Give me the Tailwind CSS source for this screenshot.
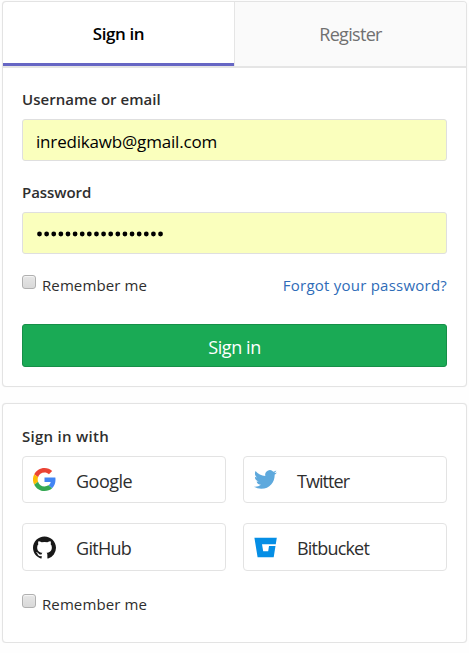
<!DOCTYPE html>
<html lang="en">
<head>
<meta charset="utf-8">
<title>Sign in</title>
<script src="https://cdn.jsdelivr.net/npm/@tailwindcss/browser@4"></script>
</head>
<body class="bg-[#fefefe] pt-px pl-0.5 font-['Open_Sans',sans-serif] text-[#2e2e2e] overflow-hidden">
<main class="flex w-[465px] flex-col gap-4">
  <section class="h-[386px] rounded border border-[#e3e3e3] bg-white shadow-[0_0_1px_#e5e5e5]">
    <nav class="flex h-[66px] overflow-hidden rounded-t-[3px] border-b-2 border-[#e5e5e5] text-[18px] leading-6">
      <a class="flex w-[231px] items-center justify-center border-b-[3px] border-[#6666c4] pt-0.5 text-[17px] font-semibold text-black"><span class="tracking-[-0.4px]">Sign in</span></a>
      <a class="flex flex-1 items-center justify-center border-l border-[#e5e5e5] bg-[#fafafa] text-[#707070]"><span class="tracking-[-0.7px]">Register</span></a>
    </nav>
    <form class="px-[19px] pt-5">
      <label class="block h-[31px] text-[15px] leading-[22px] font-semibold"><span class="tracking-[0.03px]">Username or email</span></label>
      <div class="flex h-[42px] items-center rounded-[3px] border border-[#dfdfdf] bg-[#faffbd] pt-1 pl-[13px] text-[17px] text-black"><span class="tracking-[-0.18px]">inredikawb@gmail.com</span></div>
      <label class="mt-5 block h-[31px] text-[15px] leading-[23px] font-semibold"><span class="tracking-[-0.05px]">Password</span></label>
      <div class="flex h-[42px] items-center rounded-[3px] border border-[#dfdfdf] bg-[#faffbd] pt-0.5 pl-[13px]">
        <svg width="130" height="8" viewBox="0 0 130 8"><path d="M3.5 4H127" fill="none" stroke="#000" stroke-width="4.8" stroke-linecap="round" stroke-dasharray="0 7.12"/></svg>
      </div>
      <div class="mt-5 flex h-[50px] items-start justify-between text-[15px] leading-[22px]">
        <label class="flex gap-1.5"><i class="mt-px h-3.5 w-3.5 rounded-[3px] border border-[#b0b0b0] bg-linear-to-b from-[#e6e6e6] to-[#d9d9d9] shadow-[inset_0_1px_1px_#f5f5f5]"></i><span class="tracking-[0.1px]">Remember me</span></label>
        <a class="text-[#2f6cb8]"><span class="tracking-[0.23px]">Forgot your password?</span></a>
      </div>
      <button type="button" class="flex h-[43px] w-full items-center justify-center rounded-[3px] border border-[#168f48] bg-[#1aaa55] pt-1 text-[18px] text-white"><span class="tracking-[-0.4px]">Sign in</span></button>
    </form>
  </section>

  <section class="h-60 rounded border border-[#e3e3e3] bg-white px-[19px] pt-[21px] shadow-[0_0_1px_#e5e5e5]">
    <h2 class="h-[31px] text-[15px] leading-[22px] font-semibold"><span class="tracking-[0.28px]">Sign in with</span></h2>
    <div class="grid grid-cols-2 gap-x-[17px] gap-y-5 text-[18px]">
      <a class="flex h-[47px] items-center gap-5 rounded border border-[#e3e3e3] pl-2.5">
        <svg class="h-[23px] w-[23px]" viewBox="0 0 48 48"><path fill="#EA4335" d="M24 9.5c3.54 0 6.71 1.22 9.21 3.6l6.85-6.85C35.9 2.38 30.47 0 24 0 14.62 0 6.51 5.38 2.56 13.22l7.98 6.19C12.43 13.72 17.74 9.5 24 9.5z"/><path fill="#4285F4" d="M46.98 24.55c0-1.57-.15-3.09-.38-4.55H24v9.02h12.94c-.58 2.96-2.26 5.48-4.78 7.18l7.73 6c4.51-4.18 7.09-10.36 7.09-17.65z"/><path fill="#FBBC05" d="M10.53 28.59a14.5 14.5 0 0 1 0-9.18l-7.98-6.19a24 24 0 0 0 0 21.56l7.98-6.19z"/><path fill="#34A853" d="M24 48c6.48 0 11.93-2.13 15.89-5.81l-7.73-6c-2.15 1.45-4.92 2.3-8.16 2.3-6.26 0-11.57-4.22-13.47-9.91l-7.98 6.19C6.51 42.62 14.62 48 24 48z"/></svg>
        <span class="pt-1 tracking-[-0.5px]">Google</span>
      </a>
      <a class="flex h-[47px] items-center gap-5 rounded border border-[#e3e3e3] pl-2.5">
        <svg class="h-[23px] w-[23px]" viewBox="0 0 24 24"><path fill="#5ea9dd" d="M23.95 4.57a10 10 0 0 1-2.82.77 4.96 4.96 0 0 0 2.16-2.72c-.95.55-2 .95-3.13 1.18a4.92 4.92 0 0 0-8.38 4.48C7.69 8.1 4.07 6.13 1.64 3.16a4.82 4.82 0 0 0-.67 2.48c0 1.71.87 3.21 2.19 4.1a4.9 4.9 0 0 1-2.23-.62v.06a4.92 4.92 0 0 0 3.95 4.83 5 5 0 0 1-2.21.08 4.94 4.94 0 0 0 4.6 3.42A9.87 9.87 0 0 1 0 19.54a13.99 13.99 0 0 0 7.55 2.21c9.05 0 14-7.5 14-13.98 0-.21 0-.42-.02-.63a9.94 9.94 0 0 0 2.42-2.57z"/></svg>
        <span class="pt-1 tracking-[-0.95px]">Twitter</span>
      </a>
      <a class="flex h-12 items-center gap-5 rounded border border-[#e3e3e3] pl-2.5">
        <svg class="h-[23px] w-[23px]" viewBox="0 0 24 24"><path fill="#181818" d="M12 .5C5.37.5 0 5.78 0 12.29c0 5.21 3.44 9.63 8.2 11.19.6.11.82-.25.82-.57v-2.01c-3.34.71-4.04-1.59-4.04-1.59-.55-1.37-1.33-1.73-1.33-1.73-1.09-.73.08-.72.08-.72 1.2.08 1.84 1.22 1.84 1.22 1.07 1.8 2.81 1.28 3.49.98.11-.77.42-1.28.76-1.58-2.66-.29-5.47-1.31-5.47-5.82 0-1.29.47-2.34 1.24-3.16-.13-.3-.54-1.5.11-3.12 0 0 1.01-.32 3.3 1.21a11.7 11.7 0 0 1 6.01 0c2.29-1.53 3.3-1.21 3.3-1.21.65 1.62.24 2.82.12 3.12.77.82 1.23 1.87 1.23 3.16 0 4.53-2.81 5.53-5.48 5.82.43.37.81 1.08.81 2.18v3.24c0 .32.22.69.83.57A11.8 11.8 0 0 0 24 12.29C24 5.78 18.63.5 12 .5z"/></svg>
        <span class="pt-[3px] tracking-[-0.7px]">GitHub</span>
      </a>
      <a class="flex h-12 items-center gap-5 rounded border border-[#e3e3e3] pl-2.5">
        <svg class="h-[23px] w-[23px]" viewBox="0 0 23 23"><path fill="#058ee5" fill-rule="evenodd" d="M.4 1.7H22.8L19.7 21.2H3.6zM8 8.3 9.2 15.3H14.2L15 10H21.5L21.8 8.3z"/></svg>
        <span class="pt-[3px] tracking-[-0.8px]">Bitbucket</span>
      </a>
    </div>
    <label class="mt-[22px] flex gap-1.5 text-[15px] leading-[22px]"><i class="mt-px h-3.5 w-3.5 rounded-[3px] border border-[#b0b0b0] bg-linear-to-b from-[#e6e6e6] to-[#d9d9d9] shadow-[inset_0_1px_1px_#f5f5f5]"></i><span class="tracking-[0.1px]">Remember me</span></label>
  </section>
</main>
</body>
</html>
